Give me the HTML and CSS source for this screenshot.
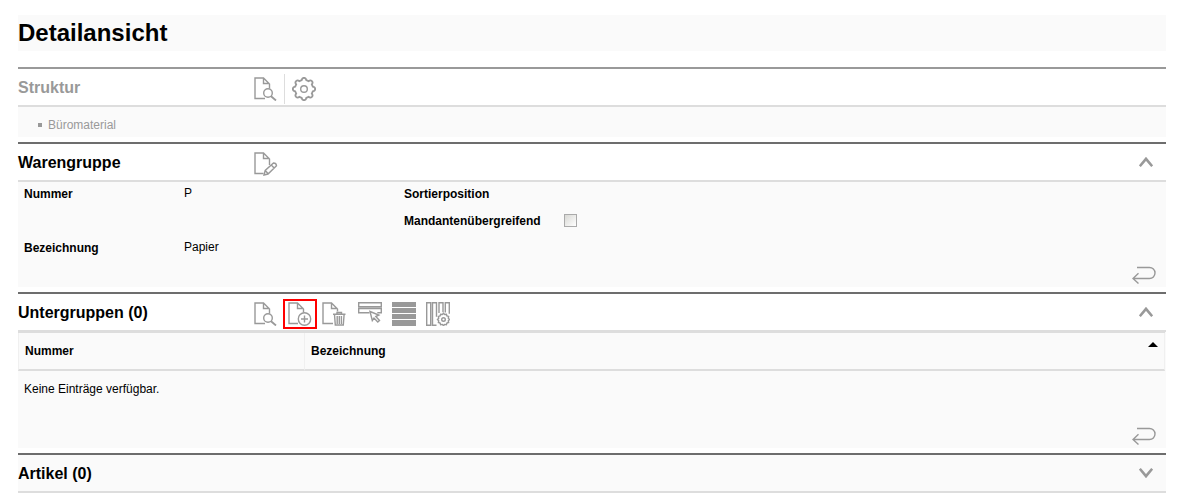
FILE: index.html
```
<!DOCTYPE html>
<html lang="de">
<head>
    <meta charset="UTF-8">
    <meta name="viewport" content="width=device-width, initial-scale=1.0">
    <title>Detailansicht</title>
    <link rel="stylesheet" href="styles.css">
</head>
<body>
    <!-- Shared icon shapes -->
    <svg class="icon-defs" aria-hidden="true">
        <symbol id="icon-search" viewBox="0 0 24 24">
            <path d="M11 21.500H1V1h8.500L15.500 7v4.500M9.500 1v5.500h6"/>
            <circle cx="14" cy="16" r="4.300"/>
            <path class="thick" d="M17 19.200l5 4.300"/>
        </symbol>
        <symbol id="icon-edit" viewBox="0 0 24 24">
            <path d="M9.500 21.500H1V1h8.500L15.500 7v6M9.500 1v5.500h6"/>
            <path d="M10 23l1.200-4.500 8.300-7.500q2.800 0 3 2.800L14 22zM11.200 18.500l3 3.300M17.300 13l2.800 3"/>
        </symbol>
        <symbol id="icon-add" viewBox="0 0 24 24">
            <path d="M10 21.500H1V1h8.500L15.500 7v3.500M9.500 1v5.500h6"/>
            <circle cx="16.500" cy="17" r="6.200"/>
            <path d="M16.500 13.500v7M13 17h7"/>
        </symbol>
        <symbol id="icon-delete" viewBox="0 0 24 24">
            <path d="M11 21.500H1V1h8.500L15.500 7v2.500M9.500 1v5.500h6"/>
            <path d="M11 12.200h12.500M15 12v-1.500h4.500V12M12.500 12.500l.8 10.500h8l.8-10.500M15.200 14v8M17.300 14v8M19.400 14v8"/>
        </symbol>
        <symbol id="icon-gear" viewBox="0 0 24 24">
            <path class="thick" d="M9.700 3.200 Q10 .8 12 .8 Q14 .8 14.300 3.200 L16.600 4.200 Q18.400 2.700 19.900 4.100 Q21.300 5.600 19.800 7.400 L20.800 9.700 Q23.200 10 23.200 12 Q23.200 14 20.800 14.300 L19.800 16.600 Q21.300 18.400 19.900 19.900 Q18.400 21.300 16.600 19.800 L14.300 20.800 Q14 23.200 12 23.200 Q10 23.200 9.700 20.800 L7.400 19.800 Q5.600 21.300 4.100 19.900 Q2.700 18.400 4.200 16.600 L3.200 14.300 Q.8 14 .8 12 Q.8 10 3.200 9.700 L4.200 7.400 Q2.700 5.600 4.100 4.100 Q5.600 2.700 7.400 4.200 Z"/>
            <circle cx="12" cy="12" r="3.300"/>
        </symbol>
        <symbol id="icon-select" viewBox="0 0 24 24">
            <path d="M.7 .7h22.600v4H.7zM11.500 10.800H.7V6.500h22.600v4.300h-4"/>
            <path d="M12 9.500l8.800 3.500-3 1.500 3.700 4-1.700 1.500-3.800-4-1.700 2.500z"/>
        </symbol>
        <symbol id="icon-rows" viewBox="0 0 24 24">
            <path class="solid" d="M0 0h24v5H0zM0 6h24v5H0zM0 12h24v5H0zM0 18h24v6H0z"/>
        </symbol>
        <symbol id="icon-columns" viewBox="0 0 24 24">
            <path d="M.7 .7h4v22.600h-4zM10.500 23.300h-4V.7h4v14M13 11V.7h4v9.500M19.300 10.500V.7h4v11"/>
            <path d="M16.300 12.500l1.200-1.300 1.200 1.300 1.700-.3.5 1.700 1.700.5-.3 1.800 1.200 1.300-1.200 1.300.3 1.700-1.700.5-.5 1.700-1.700-.3-1.200 1.200-1.200-1.200-1.700.3-.5-1.700-1.700-.5.3-1.700-1.200-1.300 1.200-1.300-.3-1.800 1.700-.5.5-1.700z"/>
            <circle cx="17.500" cy="17.500" r="1.800"/>
        </symbol>
        <symbol id="icon-up" viewBox="0 0 14 10">
            <path class="arrow" d="M.8 9.200L7 1.800l6.200 7.400"/>
        </symbol>
        <symbol id="icon-down" viewBox="0 0 14 10">
            <path class="arrow" d="M.8 .8L7 8.200 13.200 .8"/>
        </symbol>
        <symbol id="icon-return" viewBox="0 0 24 18">
            <path d="M5 1.500h12.500a5.500 5.500 0 0 1 0 11H1M6.500 7.300L1 12.500l5.500 5"/>
        </symbol>
    </svg>

    <h1 class="page-title">Detailansicht</h1>

    <!-- Struktur -->
    <section class="panel panel-muted">
        <div class="panel-header">
            <h2>Struktur</h2>
            <div class="toolbar">
                <button type="button" aria-label="Anzeigen"><svg class="icon"><use href="#icon-search"/></svg></button>
                <span class="separator"></span>
                <button type="button" aria-label="Einstellungen"><svg class="icon"><use href="#icon-gear"/></svg></button>
            </div>
        </div>
        <div class="panel-body">
            <ul class="tree">
                <li>Büromaterial</li>
            </ul>
        </div>
    </section>

    <!-- Warengruppe -->
    <section class="panel">
        <div class="panel-header">
            <h2>Warengruppe</h2>
            <div class="toolbar">
                <button type="button" aria-label="Bearbeiten"><svg class="icon"><use href="#icon-edit"/></svg></button>
            </div>
            <button type="button" class="toggle" aria-label="Zuklappen"><svg class="chevron"><use href="#icon-up"/></svg></button>
        </div>
        <div class="panel-body">
            <div class="fields">
                <span class="label">Nummer</span>
                <span class="value">P</span>
                <span class="label">Sortierposition</span>
                <span class="value"></span>
                <label class="label label-check" for="mandant">Mandantenübergreifend</label>
                <span class="value"><input type="checkbox" id="mandant"></span>
                <span class="label">Bezeichnung</span>
                <span class="value">Papier</span>
            </div>
            <div class="panel-footer">
                <button type="button" aria-label="Zurück"><svg class="return"><use href="#icon-return"/></svg></button>
            </div>
        </div>
    </section>

    <!-- Untergruppen -->
    <section class="panel">
        <div class="panel-header">
            <h2>Untergruppen (0)</h2>
            <div class="toolbar">
                <button type="button" aria-label="Anzeigen"><svg class="icon"><use href="#icon-search"/></svg></button>
                <button type="button" class="highlight" aria-label="Neu"><svg class="icon"><use href="#icon-add"/></svg></button>
                <button type="button" aria-label="Löschen"><svg class="icon"><use href="#icon-delete"/></svg></button>
            </div>
            <div class="toolbar toolbar-view">
                <button type="button" aria-label="Auswählen"><svg class="icon"><use href="#icon-select"/></svg></button>
                <button type="button" aria-label="Zeilen"><svg class="icon"><use href="#icon-rows"/></svg></button>
                <button type="button" aria-label="Spalten"><svg class="icon"><use href="#icon-columns"/></svg></button>
            </div>
            <button type="button" class="toggle" aria-label="Zuklappen"><svg class="chevron"><use href="#icon-up"/></svg></button>
        </div>
        <div class="panel-body">
            <table class="list">
                <thead>
                    <tr>
                        <th class="col-number">Nummer</th>
                        <th>
                            <div class="sortable">Bezeichnung <span class="sort-up"></span></div>
                        </th>
                    </tr>
                </thead>
                <tbody>
                    <tr>
                        <td colspan="2">Keine Einträge verfügbar.</td>
                    </tr>
                </tbody>
            </table>
            <div class="panel-footer">
                <button type="button" aria-label="Zurück"><svg class="return"><use href="#icon-return"/></svg></button>
            </div>
        </div>
    </section>

    <!-- Artikel -->
    <section class="panel panel-closed">
        <div class="panel-header">
            <h2>Artikel (0)</h2>
            <button type="button" class="toggle" aria-label="Aufklappen"><svg class="chevron"><use href="#icon-down"/></svg></button>
        </div>
    </section>
</body>
</html>
```
FILE: styles.css
```
* {
    box-sizing: border-box;
}

body {
    margin: 0;
    padding: 15px 18px 0;
    background-color: #ffffff;
    color: #000000;
    font-family: "Liberation Sans", Arial, sans-serif;
    font-size: 12px;
}

button {
    display: flex;
    align-items: center;
    justify-content: center;
    padding: 0;
    border: 0;
    background: none;
    cursor: pointer;
}

.page-title {
    margin: 0 0 16px;
    background-color: #fafafa;
    font-size: 24px;
    line-height: 36px;
}

/* Icons */
.icon-defs {
    display: none;
}

symbol path, symbol circle {
    fill: none;
    stroke: #999999;
    stroke-width: 1.4;
}

symbol .thick {
    stroke-width: 1.8;
}

symbol .solid {
    fill: #999999;
    stroke: none;
}

symbol .arrow {
    stroke-width: 2.6;
}

.icon {
    width: 24px;
    height: 24px;
}

.chevron {
    width: 14px;
    height: 10px;
}

.return {
    width: 24px;
    height: 18px;
}

/* Panels */
.panel {
    margin-bottom: 5px;
}

.panel-header {
    display: flex;
    align-items: center;
    height: 40px;
    border-top: 2px solid #6d6d6d;
    border-bottom: 2px solid #dddddd;
}

.panel-header h2 {
    width: 231px;
    margin: 0;
    padding-top: 2px;
    font-size: 16px;
    line-height: 34px;
}

.panel-muted .panel-header {
    border-top-color: #999999;
}

.panel-muted h2 {
    color: #999999;
}

.panel-closed .panel-header {
    background-color: #fafafa;
}

.panel-body {
    background-color: #fafafa;
}

.toolbar {
    display: flex;
    align-items: center;
    padding-top: 4px;
}

.toolbar-view {
    margin-left: 2px;
}

.toolbar button {
    width: 34px;
    height: 30px;
}

.toolbar .highlight {
    border: 2px solid #ff0000;
}

.separator {
    width: 1px;
    height: 30px;
    margin: 0 2px 0 1px;
    background-color: #dddddd;
}

.toggle {
    width: 34px;
    height: 30px;
    margin-left: auto;
    margin-right: 3px;
}

.panel-footer {
    display: flex;
    justify-content: flex-end;
    height: 24px;
    padding-right: 10px;
}

/* Struktur */
.tree {
    margin: 0;
    padding: 9px 0 3px 20px;
    color: #999999;
    list-style: none;
}

.tree li {
    display: flex;
    align-items: center;
    gap: 6px;
    line-height: 18px;
}

.tree li::before {
    content: "";
    width: 4px;
    height: 4px;
    background-color: #999999;
}

/* Fields */
.fields {
    display: grid;
    grid-template-columns: 160px 220px 160px 1fr;
    grid-auto-rows: 27px;
    padding-left: 6px;
    line-height: 23px;
}

.label {
    padding-top: 1px;
    font-weight: bold;
}

.label-check {
    grid-column: 3;
}

.fields input {
    appearance: none;
    display: block;
    width: 13px;
    height: 13px;
    margin: 5px 0 0;
    border: 1px solid #aaaaaa;
    background-image: linear-gradient(135deg, #d8d8d4, #ffffff);
}

/* List */
.list {
    width: calc(100% - 1px);
    border-collapse: separate;
    border-spacing: 0;
    border-top: 1px solid #dddddd;
}

.list th {
    height: 38px;
    padding: 0 6px;
    border-left: 1px solid #f0f0f0;
    border-bottom: 2px solid #dddddd;
    text-align: left;
}

.list th:last-child {
    border-right: 1px solid #f0f0f0;
}

.list .col-number {
    width: 286px;
}

.list td {
    height: 53px;
    padding: 9px 6px;
    line-height: 18px;
    vertical-align: top;
}

.sortable {
    display: flex;
    align-items: center;
    justify-content: space-between;
}

.sort-up {
    margin-bottom: 14px;
    border: 5px solid transparent;
    border-top: 0;
    border-bottom-color: #000000;
}
```
